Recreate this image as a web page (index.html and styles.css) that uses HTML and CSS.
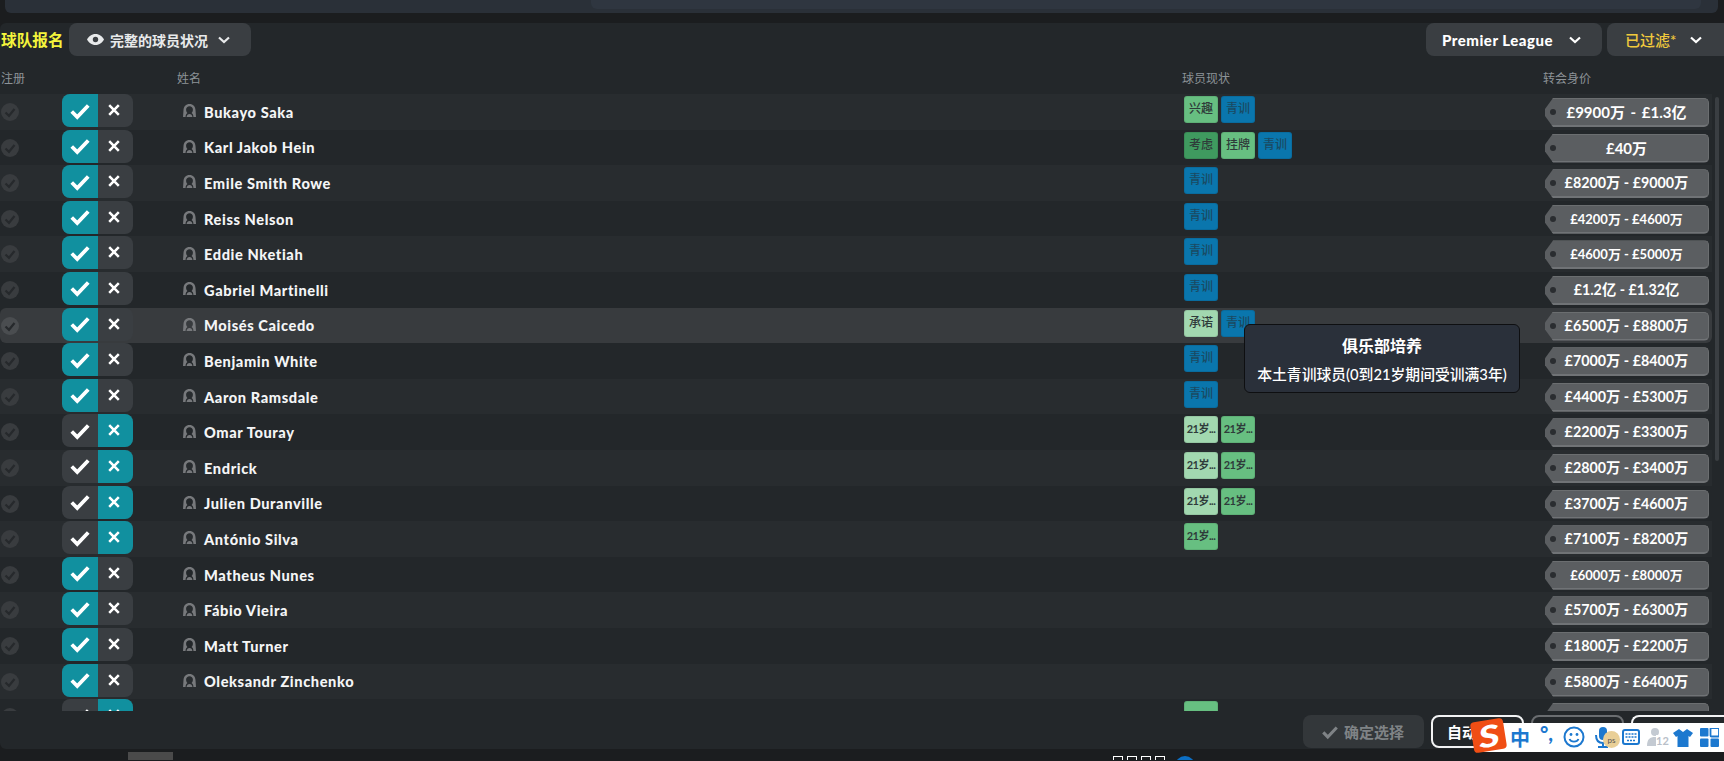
FILE: index.html
```html
<!DOCTYPE html>
<html lang="zh-CN">
<head>
    <meta charset="UTF-8">
    <title>球队报名</title>
    <link rel="stylesheet" href="styles.css">
</head>
<body>
    <svg class="icon-defs" width="0" height="0">
        <symbol id="i-check" viewBox="0 0 20 20"><path d="M2.5 10.5 L7.5 15.5 L17.5 5" fill="none" stroke="currentColor" stroke-width="3.4"/></symbol>
        <symbol id="i-cross" viewBox="0 0 20 20"><path d="M4 4 L16 16 M16 4 L4 16" fill="none" stroke="currentColor" stroke-width="3.2"/></symbol>
        <symbol id="i-chevron" viewBox="0 0 14 10"><path d="M2 2.5 L7 7 L12 2.5" fill="none" stroke="currentColor" stroke-width="2.2"/></symbol>
        <symbol id="i-reg" viewBox="0 0 18 18"><circle cx="9" cy="9" r="9" fill="currentColor"/><path d="M4.5 9.5 L8 12.8 L13.5 6" fill="none" stroke="#26292c" stroke-width="2.2"/></symbol>
        <symbol id="i-person" viewBox="0 0 13 13"><path d="M6.5 0 C10.2 0 12.2 2.4 12.5 6 L13 13 H10.4 C10.4 11 9.8 9.8 8.6 9 C9.5 8.2 9.9 7 9.9 5.6 C9.9 3.6 8.4 2.3 6.5 2.3 C4.6 2.3 3.1 3.6 3.1 5.6 C3.1 7 3.5 8.2 4.4 9 C3.2 9.8 2.6 11 2.6 13 H0 L.5 6 C.8 2.4 2.8 0 6.5 0 Z" fill="#77797c"/><path d="M3.6 13 C3.7 11 5 10 6.5 10 C8 10 9.3 11 9.4 13 Z" fill="#77797c"/></symbol>
    </svg>

    <div class="top-strip"><div class="top-strip-inner"></div></div>

    <main class="panel">
        <div class="toolbar">
            <span class="page-title">球队报名</span>
            <button class="drop drop-view">
                <svg class="eye" width="17" height="11" viewBox="0 0 17 11"><path d="M8.5 0 C12.5 0 15.6 2.6 17 5.5 C15.6 8.4 12.5 11 8.5 11 C4.5 11 1.4 8.4 0 5.5 C1.4 2.6 4.5 0 8.5 0 Z" fill="#e8eaeb"/><circle cx="8.5" cy="5.5" r="2.7" fill="#3c4044"/></svg>
                <span>完整的球员状况</span>
                <svg class="chev" width="14" height="10"><use href="#i-chevron"/></svg>
            </button>
            <div class="toolbar-space"></div>
            <button class="drop drop-league">
                <span>Premier League</span>
                <svg class="chev" width="14" height="10"><use href="#i-chevron"/></svg>
            </button>
            <button class="drop drop-filter">
                <span class="filter-label">已过滤*</span>
                <svg class="chev" width="14" height="10"><use href="#i-chevron"/></svg>
            </button>
        </div>

        <div class="row-grid col-head">
            <span>注册</span>
            <span></span>
            <span>姓名</span>
            <span>球员现状</span>
            <span>转会身价</span>
        </div>

        <div class="list-wrap">
            <div class="list">
                <div class="row-grid row">
                    <svg class="reg" width="18" height="18"><use href="#i-reg"/></svg>
                    <div class="toggle"><span class="on"><svg width="18" height="18"><use href="#i-check"/></svg></span><span><svg width="16" height="16"><use href="#i-cross"/></svg></span></div>
                    <div class="name"><svg width="13" height="13"><use href="#i-person"/></svg>Bukayo Saka</div>
                    <div class="tags"><span class="tag green">兴趣</span><span class="tag blue">青训</span></div>
                    <div class="price big">£9900万 - £1.3亿</div>
                </div>
                <div class="row-grid row">
                    <svg class="reg" width="18" height="18"><use href="#i-reg"/></svg>
                    <div class="toggle"><span class="on"><svg width="18" height="18"><use href="#i-check"/></svg></span><span><svg width="16" height="16"><use href="#i-cross"/></svg></span></div>
                    <div class="name"><svg width="13" height="13"><use href="#i-person"/></svg>Karl Jakob Hein</div>
                    <div class="tags"><span class="tag dark">考虑</span><span class="tag green">挂牌</span><span class="tag blue">青训</span></div>
                    <div class="price big">£40万</div>
                </div>
                <div class="row-grid row">
                    <svg class="reg" width="18" height="18"><use href="#i-reg"/></svg>
                    <div class="toggle"><span class="on"><svg width="18" height="18"><use href="#i-check"/></svg></span><span><svg width="16" height="16"><use href="#i-cross"/></svg></span></div>
                    <div class="name"><svg width="13" height="13"><use href="#i-person"/></svg>Emile Smith Rowe</div>
                    <div class="tags"><span class="tag blue">青训</span></div>
                    <div class="price">£8200万 - £9000万</div>
                </div>
                <div class="row-grid row">
                    <svg class="reg" width="18" height="18"><use href="#i-reg"/></svg>
                    <div class="toggle"><span class="on"><svg width="18" height="18"><use href="#i-check"/></svg></span><span><svg width="16" height="16"><use href="#i-cross"/></svg></span></div>
                    <div class="name"><svg width="13" height="13"><use href="#i-person"/></svg>Reiss Nelson</div>
                    <div class="tags"><span class="tag blue">青训</span></div>
                    <div class="price small">£4200万 - £4600万</div>
                </div>
                <div class="row-grid row">
                    <svg class="reg" width="18" height="18"><use href="#i-reg"/></svg>
                    <div class="toggle"><span class="on"><svg width="18" height="18"><use href="#i-check"/></svg></span><span><svg width="16" height="16"><use href="#i-cross"/></svg></span></div>
                    <div class="name"><svg width="13" height="13"><use href="#i-person"/></svg>Eddie Nketiah</div>
                    <div class="tags"><span class="tag blue">青训</span></div>
                    <div class="price small">£4600万 - £5000万</div>
                </div>
                <div class="row-grid row">
                    <svg class="reg" width="18" height="18"><use href="#i-reg"/></svg>
                    <div class="toggle"><span class="on"><svg width="18" height="18"><use href="#i-check"/></svg></span><span><svg width="16" height="16"><use href="#i-cross"/></svg></span></div>
                    <div class="name"><svg width="13" height="13"><use href="#i-person"/></svg>Gabriel Martinelli</div>
                    <div class="tags"><span class="tag blue">青训</span></div>
                    <div class="price">£1.2亿 - £1.32亿</div>
                </div>
                <div class="row-grid row row-hover">
                    <svg class="reg" width="18" height="18"><use href="#i-reg"/></svg>
                    <div class="toggle"><span class="on"><svg width="18" height="18"><use href="#i-check"/></svg></span><span><svg width="16" height="16"><use href="#i-cross"/></svg></span></div>
                    <div class="name"><svg width="13" height="13"><use href="#i-person"/></svg>Moisés Caicedo</div>
                    <div class="tags"><span class="tag pale">承诺</span><span class="tag blue">青训</span></div>
                    <div class="price">£6500万 - £8800万</div>
                </div>
                <div class="row-grid row">
                    <svg class="reg" width="18" height="18"><use href="#i-reg"/></svg>
                    <div class="toggle"><span class="on"><svg width="18" height="18"><use href="#i-check"/></svg></span><span><svg width="16" height="16"><use href="#i-cross"/></svg></span></div>
                    <div class="name"><svg width="13" height="13"><use href="#i-person"/></svg>Benjamin White</div>
                    <div class="tags"><span class="tag blue">青训</span></div>
                    <div class="price">£7000万 - £8400万</div>
                </div>
                <div class="row-grid row">
                    <svg class="reg" width="18" height="18"><use href="#i-reg"/></svg>
                    <div class="toggle"><span class="on"><svg width="18" height="18"><use href="#i-check"/></svg></span><span><svg width="16" height="16"><use href="#i-cross"/></svg></span></div>
                    <div class="name"><svg width="13" height="13"><use href="#i-person"/></svg>Aaron Ramsdale</div>
                    <div class="tags"><span class="tag blue">青训</span></div>
                    <div class="price">£4400万 - £5300万</div>
                </div>
                <div class="row-grid row">
                    <svg class="reg" width="18" height="18"><use href="#i-reg"/></svg>
                    <div class="toggle"><span><svg width="18" height="18"><use href="#i-check"/></svg></span><span class="on"><svg width="16" height="16"><use href="#i-cross"/></svg></span></div>
                    <div class="name"><svg width="13" height="13"><use href="#i-person"/></svg>Omar Touray</div>
                    <div class="tags"><span class="tag pale tight">21岁...</span><span class="tag green tight">21岁...</span></div>
                    <div class="price">£2200万 - £3300万</div>
                </div>
                <div class="row-grid row">
                    <svg class="reg" width="18" height="18"><use href="#i-reg"/></svg>
                    <div class="toggle"><span><svg width="18" height="18"><use href="#i-check"/></svg></span><span class="on"><svg width="16" height="16"><use href="#i-cross"/></svg></span></div>
                    <div class="name"><svg width="13" height="13"><use href="#i-person"/></svg>Endrick</div>
                    <div class="tags"><span class="tag pale tight">21岁...</span><span class="tag green tight">21岁...</span></div>
                    <div class="price">£2800万 - £3400万</div>
                </div>
                <div class="row-grid row">
                    <svg class="reg" width="18" height="18"><use href="#i-reg"/></svg>
                    <div class="toggle"><span><svg width="18" height="18"><use href="#i-check"/></svg></span><span class="on"><svg width="16" height="16"><use href="#i-cross"/></svg></span></div>
                    <div class="name"><svg width="13" height="13"><use href="#i-person"/></svg>Julien Duranville</div>
                    <div class="tags"><span class="tag pale tight">21岁...</span><span class="tag green tight">21岁...</span></div>
                    <div class="price">£3700万 - £4600万</div>
                </div>
                <div class="row-grid row">
                    <svg class="reg" width="18" height="18"><use href="#i-reg"/></svg>
                    <div class="toggle"><span><svg width="18" height="18"><use href="#i-check"/></svg></span><span class="on"><svg width="16" height="16"><use href="#i-cross"/></svg></span></div>
                    <div class="name"><svg width="13" height="13"><use href="#i-person"/></svg>António Silva</div>
                    <div class="tags"><span class="tag green tight">21岁...</span></div>
                    <div class="price">£7100万 - £8200万</div>
                </div>
                <div class="row-grid row">
                    <svg class="reg" width="18" height="18"><use href="#i-reg"/></svg>
                    <div class="toggle"><span class="on"><svg width="18" height="18"><use href="#i-check"/></svg></span><span><svg width="16" height="16"><use href="#i-cross"/></svg></span></div>
                    <div class="name"><svg width="13" height="13"><use href="#i-person"/></svg>Matheus Nunes</div>
                    <div class="tags"></div>
                    <div class="price small">£6000万 - £8000万</div>
                </div>
                <div class="row-grid row">
                    <svg class="reg" width="18" height="18"><use href="#i-reg"/></svg>
                    <div class="toggle"><span class="on"><svg width="18" height="18"><use href="#i-check"/></svg></span><span><svg width="16" height="16"><use href="#i-cross"/></svg></span></div>
                    <div class="name"><svg width="13" height="13"><use href="#i-person"/></svg>Fábio Vieira</div>
                    <div class="tags"></div>
                    <div class="price">£5700万 - £6300万</div>
                </div>
                <div class="row-grid row">
                    <svg class="reg" width="18" height="18"><use href="#i-reg"/></svg>
                    <div class="toggle"><span class="on"><svg width="18" height="18"><use href="#i-check"/></svg></span><span><svg width="16" height="16"><use href="#i-cross"/></svg></span></div>
                    <div class="name"><svg width="13" height="13"><use href="#i-person"/></svg>Matt Turner</div>
                    <div class="tags"></div>
                    <div class="price">£1800万 - £2200万</div>
                </div>
                <div class="row-grid row">
                    <svg class="reg" width="18" height="18"><use href="#i-reg"/></svg>
                    <div class="toggle"><span class="on"><svg width="18" height="18"><use href="#i-check"/></svg></span><span><svg width="16" height="16"><use href="#i-cross"/></svg></span></div>
                    <div class="name"><svg width="13" height="13"><use href="#i-person"/></svg>Oleksandr Zinchenko</div>
                    <div class="tags"></div>
                    <div class="price">£5800万 - £6400万</div>
                </div>
                <!-- cut off by the footer, only the top few pixels show -->
                <div class="row-grid row">
                    <svg class="reg" width="18" height="18"><use href="#i-reg"/></svg>
                    <div class="toggle"><span><svg width="18" height="18"><use href="#i-check"/></svg></span><span class="on"><svg width="16" height="16"><use href="#i-cross"/></svg></span></div>
                    <div class="name"></div>
                    <div class="tags"><span class="tag green"></span></div>
                    <div class="price"></div>
                </div>
            </div>
            <div class="scroll-track"><div class="scroll-thumb"></div></div>
        </div>

        <div class="footer">
            <button class="btn btn-confirm"><svg width="18" height="18"><use href="#i-check"/></svg>确定选择</button>
            <button class="btn btn-outline">自动选择</button>
            <button class="btn btn-outline btn-dim"></button>
            <button class="btn btn-outline btn-last"></button>
        </div>
    </main>

    <div class="bottom-bar">
        <div class="h-thumb"></div>
        <div class="tofu-group"><i></i><i></i><i></i><i></i></div>
        <div class="globe"></div>
    </div>

    <!-- Tooltip -->
    <div class="tooltip">
        <div class="tooltip-title">俱乐部培养</div>
        <div class="tooltip-text">本土青训球员(0到21岁期间受训满3年)</div>
    </div>

    <!-- IME toolbar -->
    <div class="ime">
        <div class="ime-logo"><span>S</span></div>
        <span class="ime-lang">中</span>
        <span class="ime-punct">°,</span>
        <svg class="ime-smile" width="22" height="22" viewBox="0 0 22 22"><circle cx="11" cy="11" r="9.5" fill="none" stroke="#1c78cf" stroke-width="2"/><circle cx="8" cy="8.5" r="1.4" fill="#1c78cf"/><circle cx="14" cy="8.5" r="1.4" fill="#1c78cf"/><path d="M6.5 13 C8 16.5 14 16.5 15.5 13" fill="none" stroke="#1c78cf" stroke-width="1.8"/></svg>
        <div class="ime-mic">
            <svg width="18" height="22" viewBox="0 0 18 22"><rect x="4" y="1" width="8" height="13" rx="4" fill="#1c78cf"/><path d="M1 9 C1 15 4 17 8 17 C12 17 15 15 15 9 M8 17 V21 M3 21 H13" fill="none" stroke="#1c78cf" stroke-width="2"/></svg>
            <div class="ime-ball">ps</div>
        </div>
        <svg class="ime-keys" width="18" height="16" viewBox="0 0 18 16"><rect x="1" y="1" width="16" height="14" rx="2" fill="none" stroke="#1c78cf" stroke-width="2"/><path d="M3.5 5 H14.5 M3.5 8 H14.5 M5 11.5 H13" stroke="#1c78cf" stroke-width="1.6" stroke-dasharray="2 1"/></svg>
        <div class="ime-user">
            <svg width="20" height="20" viewBox="0 0 20 20"><circle cx="8" cy="5" r="4" fill="#c4cad2"/><path d="M0 19 C0 12 3 10 8 10 C11 10 12 11 13 12 V19 Z" fill="#c4cad2"/></svg>
            <span>12</span>
        </div>
        <svg class="ime-shirt" width="20" height="20" viewBox="0 0 20 20"><path d="M6 1 L10 4 L14 1 L20 5 L17 9 L15.5 8 V19 H4.5 V8 L3 9 L0 5 Z" fill="#1c78cf"/></svg>
        <svg class="ime-grid" width="19" height="19" viewBox="0 0 19 19"><rect width="8.5" height="8.5" rx="1" fill="#1c78cf"/><rect x="10.5" width="8.5" height="8.5" rx="1" fill="none" stroke="#1c78cf" stroke-width="1.8"/><rect y="10.5" width="8.5" height="8.5" rx="1" fill="#1c78cf"/><rect x="10.5" y="10.5" width="8.5" height="8.5" rx="1" fill="#1c78cf"/></svg>
    </div>
</body>
</html>
```

FILE: styles.css
```css
:root {
    --teal: #11909f;
    --toggle-off: #3a3e42;
    --panel: #23272a;
    --drop: #3a3e42;
    --ime-blue: #1c78cf;
}

* {
    margin: 0;
    padding: 0;
    box-sizing: border-box;
}

html, body {
    height: 761px;
    overflow: hidden;
}

body {
    position: relative;
    background-color: #1b1d1f;
    color: #fff;
    font-family: "Lato", "Noto Sans CJK SC", sans-serif;
}

.icon-defs {
    position: absolute;
}

button {
    font-family: inherit;
    border: none;
}

/* Top strip */
.top-strip {
    height: 13px;
    margin: 0 6px 0 5px;
    background-color: #2a3038;
    border-radius: 0 0 6px 6px;
    display: flex;
    justify-content: flex-end;
}

.top-strip-inner {
    width: 1110px;
    height: 9px;
    margin-right: 17px;
    background-color: #2f3640;
    border-radius: 0 0 6px 6px;
}

/* Main panel */
.panel {
    height: 726px;
    margin-top: 11px;
    background-color: var(--panel);
    border-radius: 6px;
}

.toolbar {
    display: flex;
    align-items: center;
    height: 33px;
    margin-top: -1px;
}

.page-title {
    width: 69px;
    padding-left: 1px;
    font-size: 15.7px;
    font-weight: 700;
    color: #f4f43c;
    white-space: nowrap;
}

.toolbar-space {
    flex: 1;
}

.drop {
    height: 33px;
    background-color: var(--drop);
    border-radius: 8px;
    color: #fff;
    display: flex;
    align-items: center;
    font-size: 14px;
    font-weight: 700;
}

.drop-view {
    width: 182px;
    padding-left: 18px;
    color: #e8eaeb;
}

.drop-view span {
    margin-left: 6px;
}

.drop-view .chev {
    margin-left: 9px;
}

.drop-league {
    width: 176px;
    padding-left: 16px;
    font-size: 15px;
    font-weight: 900;
    letter-spacing: 0.5px;
}

.drop-league .chev {
    margin-left: 15px;
}

.drop-filter {
    width: 117px;
    margin-left: 5px;
    padding-left: 18px;
    border-radius: 8px 0 0 8px;
}

.filter-label {
    color: #f0c93c;
    font-size: 15px;
    font-weight: 500;
}

.drop-filter .chev {
    margin-left: 13px;
}

.row-grid {
    display: grid;
    grid-template-columns: 62px 115px 1005px 361px 1fr;
}

.col-head {
    height: 38px;
    align-items: center;
    padding-top: 5px;
    font-size: 12px;
    color: #8d9398;
}

.col-head span:first-child {
    padding-left: 1px;
}

/* Rows */
.list-wrap {
    height: 617px;
    overflow: hidden;
    display: flex;
}

.list {
    flex: 1;
}

.row {
    height: 35.6px;
}

.row:nth-child(odd) {
    background-color: #282c2f;
}

.row-hover,
.row-hover:nth-child(odd) {
    background-color: #383b3e;
    border-radius: 6px;
}

.reg {
    margin: 9px 0 0 1px;
    color: #393c3f;
}

.row-hover .reg {
    color: #4a4d50;
}

.toggle {
    display: flex;
    width: 71px;
    height: 33px;
    border-radius: 8px;
    overflow: hidden;
    background-color: var(--toggle-off);
}

.toggle span {
    width: 50%;
    display: flex;
    align-items: center;
    justify-content: center;
    color: #fff;
}

.toggle span:first-child svg {
    width: 22px;
    height: 22px;
}

.toggle span:last-child svg {
    margin: -1px 2px 0 0;
}

.toggle .on {
    background-color: var(--teal);
}

.name {
    display: flex;
    align-items: center;
    gap: 8px;
    padding: 1px 0 0 6px;
    font-size: 14.6px;
    font-weight: 900;
    color: #f4f5f6;
    letter-spacing: 0.6px;
}

.name svg {
    margin-top: -3px;
}

.tags {
    display: flex;
    gap: 3px;
    padding: 2px 0 0 2px;
}

.tag {
    width: 34px;
    height: 27px;
    border-radius: 3px;
    border: 1px solid rgba(0, 0, 0, 0.08);
    font-size: 12px;
    font-weight: 500;
    line-height: 24px;
    text-align: center;
    color: #2f3b3a;
    overflow: hidden;
    white-space: nowrap;
}

.tight {
    font-size: 11px;
    font-weight: 700;
    letter-spacing: -0.5px;
}

.green { background-color: #67bf81; }
.dark { background-color: #3f9a5f; }
.pale { background-color: #a2d8b0; }
.blue { background-color: #0a76ad; color: #1a4a62; }

/* Price tag, the notch on the left is cut with a clip-path */
.price {
    width: 164px;
    height: 29px;
    margin: 4px 0 0 2px;
    position: relative;
    background-color: #5b5e61;
    border-top: 1px solid #6b6e70;
    border-bottom: 2px solid #707376;
    border-right: 1px solid #6b6e70;
    border-radius: 0 5px 5px 0;
    clip-path: polygon(8px 0, 100% 0, 100% 100%, 8px 100%, 0 62%, 0 38%);
    font-size: 14.3px;
    font-weight: 700;
    line-height: 26px;
    text-align: center;
    white-space: nowrap;
}

.price::before {
    content: "";
    position: absolute;
    left: 5px;
    top: 10px;
    width: 6px;
    height: 6px;
    border-radius: 50%;
    background-color: #2a2d30;
}

.big {
    font-size: 15px;
    word-spacing: 2px;
}

.small {
    font-size: 13px;
}

.scroll-track {
    width: 12px;
    padding: 3px 5px 0 3px;
}

.scroll-thumb {
    height: 364px;
    background-color: #3a3e42;
    border-radius: 2px;
}

/* Footer */
.footer {
    display: flex;
    justify-content: flex-end;
    gap: 7px;
    padding-top: 4px;
}

.btn {
    height: 33px;
    width: 93px;
    border-radius: 8px;
    font-size: 15px;
    font-weight: 700;
    color: #fff;
    background-color: transparent;
}

.btn-confirm {
    width: 121px;
    display: flex;
    align-items: center;
    gap: 5px;
    padding-left: 18px;
    background-color: #33373a;
    color: #7f8386;
}

.btn-outline {
    border: 2px solid #f2f3f4;
    text-align: left;
    padding-left: 14px;
}

.btn-dim {
    border-color: #6a6d70;
}

.btn-last {
    border-radius: 8px 0 0 8px;
    border-right: none;
}

/* Bottom bar */
.bottom-bar {
    display: flex;
    height: 11px;
    overflow: hidden;
}

.h-thumb {
    width: 45px;
    height: 8px;
    margin: 3px 0 0 128px;
    background-color: #4a4a4a;
}

.tofu-group {
    display: flex;
    gap: 4px;
    margin: 7px 0 0 940px;
}

.tofu-group i {
    display: block;
    width: 10px;
    height: 12px;
    border: 1px solid #fff;
}

.globe {
    width: 20px;
    height: 20px;
    margin: 7px 0 0 10px;
    border-radius: 50%;
    background-color: #0c6fc4;
}

/* Tooltip */
.tooltip {
    position: absolute;
    left: 1244px;
    top: 324px;
    width: 276px;
    height: 69px;
    padding-top: 8px;
    background-color: #2a303a;
    border: 1px solid #0e0f11;
    border-radius: 6px;
    text-align: center;
    color: #fff;
}

.tooltip-title {
    font-size: 16px;
    font-weight: 700;
    margin-bottom: 6px;
}

.tooltip-text {
    font-size: 14.8px;
    font-weight: 500;
    white-space: nowrap;
}

/* IME toolbar */
.ime {
    position: absolute;
    left: 1480px;
    top: 723px;
    width: 244px;
    height: 29px;
    background-color: #fff;
    display: flex;
    align-items: center;
    color: var(--ime-blue);
}

.ime > * {
    position: absolute;
}

.ime-logo {
    left: -8px;
    top: -3px;
    width: 33px;
    height: 31px;
    border-radius: 4px;
    background-color: #f04e14;
    transform: rotate(-9deg);
    color: #fff;
    font-size: 30px;
    font-weight: 900;
    font-style: italic;
    line-height: 31px;
    text-align: center;
}

.ime-logo span {
    display: inline-block;
    transform: scaleX(1.35);
}

.ime-lang {
    left: 30px;
    font-size: 20px;
    font-weight: 700;
}

.ime-punct {
    left: 60px;
    font-size: 20px;
    font-weight: 900;
    top: -2px;
}

.ime-smile { left: 83px; top: 3px; }
.ime-mic { left: 115px; top: 3px; }

.ime-ball {
    position: absolute;
    left: 8px;
    top: 5px;
    width: 17px;
    height: 17px;
    border-radius: 50%;
    background-color: #e9cf97;
    color: #555;
    font-size: 8px;
    line-height: 19px;
    text-align: center;
}

.ime-keys { left: 142px; top: 6px; }

.ime-user {
    left: 167px;
    top: 4px;
    color: #b9c0c9;
}

.ime-user span {
    position: absolute;
    left: 9px;
    top: 8px;
    font-size: 11px;
    font-weight: 700;
    background-color: #fff;
    line-height: 12px;
}

.ime-shirt { left: 193px; top: 5px; }
.ime-grid { left: 220px; top: 5px; }
```
